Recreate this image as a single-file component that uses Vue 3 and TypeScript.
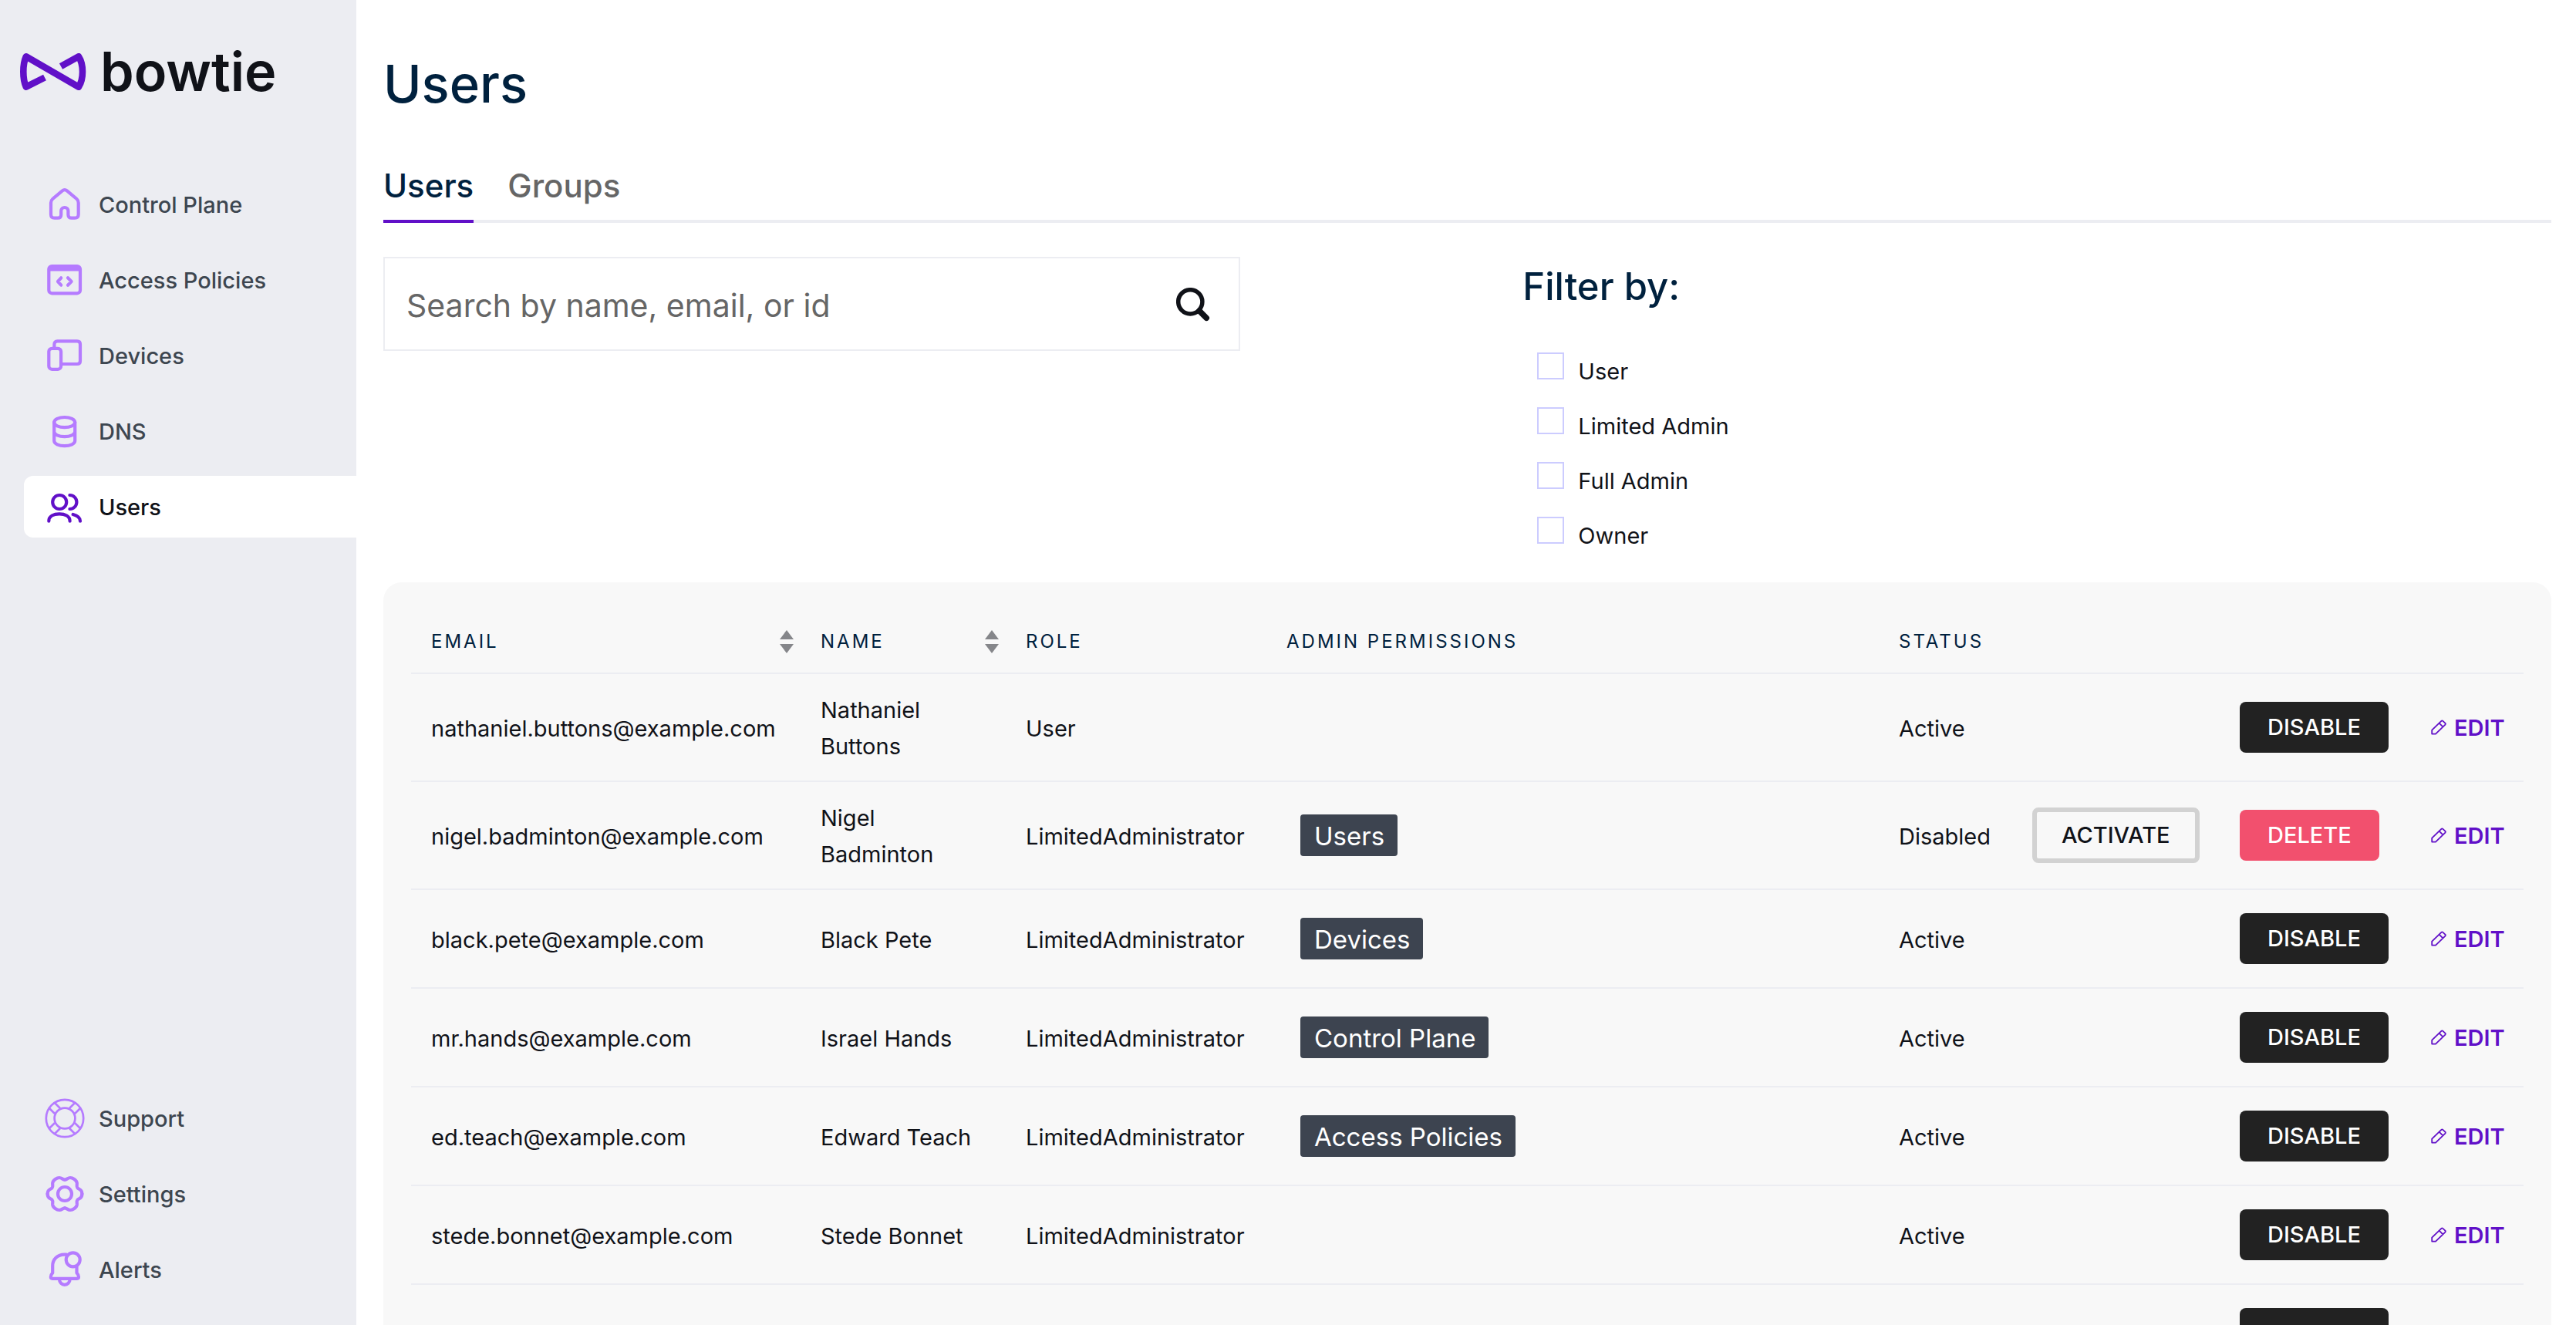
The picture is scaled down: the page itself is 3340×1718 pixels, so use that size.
<script setup lang="ts">
import { ref } from 'vue'

interface NavItem {
  label: string
  icon: string
}

interface UserRow {
  email: string
  name: string
  role: string
  permissions: string[]
  status: string
}

const mainNav: NavItem[] = [
  { label: 'Control Plane', icon: 'home' },
  { label: 'Access Policies', icon: 'policy' },
  { label: 'Devices', icon: 'devices' },
  { label: 'DNS', icon: 'dns' },
  { label: 'Users', icon: 'users' },
]

const footerNav: NavItem[] = [
  { label: 'Support', icon: 'support' },
  { label: 'Settings', icon: 'settings' },
  { label: 'Alerts', icon: 'alerts' },
]

const navGroups = [mainNav, footerNav]
const current = ref('Users')
const search = ref('')
const selectedRoles = ref<string[]>([])
const roles = ['User', 'Limited Admin', 'Full Admin', 'Owner']

const users: UserRow[] = [
  { email: 'nathaniel.buttons@example.com', name: 'Nathaniel Buttons', role: 'User', permissions: [], status: 'Active' },
  { email: 'nigel.badminton@example.com', name: 'Nigel Badminton', role: 'LimitedAdministrator', permissions: ['Users'], status: 'Disabled' },
  { email: 'black.pete@example.com', name: 'Black Pete', role: 'LimitedAdministrator', permissions: ['Devices'], status: 'Active' },
  { email: 'mr.hands@example.com', name: 'Israel Hands', role: 'LimitedAdministrator', permissions: ['Control Plane'], status: 'Active' },
  { email: 'ed.teach@example.com', name: 'Edward Teach', role: 'LimitedAdministrator', permissions: ['Access Policies'], status: 'Active' },
  { email: 'stede.bonnet@example.com', name: 'Stede Bonnet', role: 'LimitedAdministrator', permissions: [], status: 'Active' },
  { email: '', name: '', role: '', permissions: [], status: '' },
]
</script>

<template>
  <div class="app">
    <aside class="sidebar">
      <a class="brand" href="#">
        <svg class="brand-mark" viewBox="0 0 86 48" aria-hidden="true">
          <path d="M53 17 L76 4.3 Q81 12 81 24 Q81 36 76 43.7 L7.8 4.3 Q4.3 12 4.3 24 Q4.3 36 7.8 43.7 L32 31.5" />
        </svg>
        <span class="brand-name">bowtie</span>
      </a>
      <nav v-for="(group, g) in navGroups" :key="g" class="nav">
        <a
          v-for="item in group"
          :key="item.label"
          href="#"
          class="nav-item"
          :class="{ active: item.label === current }"
        >
          <svg class="nav-icon" viewBox="0 0 52 52" aria-hidden="true">
            <path
              v-if="item.icon === 'home'"
              d="M22.8 8.4 L10.2 19 Q8 21 8 24 V39 Q8 43.7 12.6 43.7 H16.8 Q21.2 43.7 21.2 39.4 V34.6 a4.6 4.6 0 0 1 9.2 0 V39.4 Q30.4 43.7 34.8 43.7 H39 Q43.7 43.7 43.7 39 V24 Q43.7 21 41.5 19 L28.9 8.4 Q25.8 5.9 22.8 8.4 Z"
            />
            <g v-else-if="item.icon === 'policy'">
              <rect x="5.3" y="8" width="40.7" height="35.3" rx="4" />
              <path d="M6 11.5 H45.5" class="thick" />
              <path d="M21.2 23.3 L17 28 L21.2 32.7 M30 23.3 L34.6 28 L30 32.7" />
            </g>
            <g v-else-if="item.icon === 'devices'">
              <path d="M12.4 16 V11.4 Q12.4 7.4 16.4 7.4 H42 Q46 7.4 46 11.4 V33 Q46 37 42 37 H22" />
              <rect x="5.3" y="16.8" width="15.8" height="27" rx="4" />
            </g>
            <g v-else-if="item.icon === 'dns'">
              <ellipse cx="25.7" cy="14.6" rx="13.5" ry="6.6" />
              <path d="M12.2 14.6 V38.6 A13.5 6.6 0 0 0 39.2 38.6 V14.6 M12.2 26.6 A13.5 6.6 0 0 0 39.2 26.6" />
            </g>
            <g v-else-if="item.icon === 'users'">
              <circle cx="19.2" cy="20" r="9" />
              <path d="M32.4 11 A9 9 0 0 1 32.4 29 M5.3 44.7 C5.3 38 12 35.4 19 35.4 S32.6 38 32.6 44.7 M36.6 36 C42 37.5 46 40 46 44.7" />
            </g>
            <g v-else-if="item.icon === 'support'" class="thin">
              <circle cx="26" cy="26" r="24.2" />
              <circle cx="26" cy="26" r="13.4" />
              <path
                v-for="angle in [0, 90, 180, 270]"
                :key="angle"
                d="M12.7 5.7 L20 13 M5.7 12.7 L13 20"
                :transform="`rotate(${angle} 26 26)`"
              />
            </g>
            <g v-else-if="item.icon === 'settings'">
              <circle cx="26" cy="26" r="9" />
              <path
                v-for="flip in ['1 1', '-1 1', '1 -1', '-1 -1']"
                :key="flip"
                d="M0 -18.4 C2.6 -18.4 4 -21 7 -21 C10 -21 15.4 -18 15.8 -14 C16 -11.4 15 -9.4 16.4 -7.8 C18 -5.8 22.4 -6.6 22.4 0"
                :transform="`translate(26 26) scale(${flip})`"
              />
            </g>
            <g v-else>
              <circle cx="36.7" cy="13.3" r="9" />
              <path d="M28 6.6 H25.5 C16.5 6.6 10.2 13 10.2 21.4 V30.6 Q7.8 33 7.8 35.8 Q7.8 37.8 9.8 37.8 H42 Q44 37.8 44 35.8 Q44 33 41.5 30.6 V22.6 M19 39 A6.8 6.8 0 0 0 32.6 39" />
            </g>
          </svg>
          <span>{{ item.label }}</span>
        </a>
      </nav>
    </aside>

    <main class="main">
      <h1 class="title">Users</h1>
      <div class="tabs">
        <a href="#" class="tab selected">Users</a>
        <a href="#" class="tab">Groups</a>
      </div>

      <section class="controls">
        <form class="search" @submit.prevent>
          <input v-model="search" type="text" aria-label="Search users" placeholder="Search by name, email, or id" />
          <button type="submit" aria-label="Search">
            <svg viewBox="0 0 44 44" aria-hidden="true">
              <circle cx="18.3" cy="18.3" r="15.6" />
              <path d="M30 30 L39.3 39.3" />
            </svg>
          </button>
        </form>
        <div class="filters">
          <h2>Filter by:</h2>
          <div class="filter-list">
            <label v-for="role in roles" :key="role">
              <input v-model="selectedRoles" type="checkbox" :value="role" />
              <span>{{ role }}</span>
            </label>
          </div>
        </div>
      </section>

      <section class="card">
        <table>
          <colgroup>
            <col class="col-email" />
            <col class="col-name" />
            <col class="col-role" />
            <col />
            <col class="col-status" />
            <col class="col-activate" />
            <col class="col-action" />
            <col class="col-edit" />
          </colgroup>
          <thead>
            <tr>
              <th v-for="head in ['Email', 'Name']" :key="head" class="sortable">
                <div class="sort-head">
                  <span>{{ head }}</span>
                  <svg viewBox="0 0 18 30" aria-hidden="true">
                    <path d="M9 0 L18 12 H0 Z M0 18 H18 L9 30 Z" />
                  </svg>
                </div>
              </th>
              <th>Role</th>
              <th>Admin Permissions</th>
              <th>Status</th>
              <th></th>
              <th></th>
              <th></th>
            </tr>
          </thead>
          <tbody>
            <tr v-for="(user, i) in users" :key="i">
              <td class="text">{{ user.email }}</td>
              <td class="text name">{{ user.name }}</td>
              <td class="text">{{ user.role }}</td>
              <td>
                <span v-for="p in user.permissions" :key="p" class="badge">{{ p }}</span>
              </td>
              <td class="text">{{ user.status }}</td>
              <td>
                <button v-if="user.status === 'Disabled'" type="button" class="btn outline">ACTIVATE</button>
              </td>
              <td>
                <button v-if="user.status === 'Disabled'" type="button" class="btn danger">DELETE</button>
                <button v-else type="button" class="btn dark">DISABLE</button>
              </td>
              <td>
                <a href="#" class="edit">
                  <svg viewBox="0 0 20 20" aria-hidden="true">
                    <path d="M1.2 18.6 V13.6 L13.4 1.8 Q14.4 0.9 15.4 1.8 L18.4 4.6 Q19.2 5.6 18.4 6.6 L6 18.6 Z M10.6 4.6 L15.4 9.4" />
                  </svg>
                  <span>EDIT</span>
                </a>
              </td>
            </tr>
          </tbody>
        </table>
      </section>
    </main>
  </div>
</template>

<style>
body {
  margin: 0;
  background: #fff;
}
</style>

<style scoped>
* {
  box-sizing: border-box;
}

.app {
  display: flex;
  height: 100vh;
  font-family: Inter, 'Liberation Sans', sans-serif;
  font-size: 29px;
  color: #101218;
}

a {
  color: inherit;
  text-decoration: none;
}

button,
input {
  font: inherit;
  margin: 0;
}

.sidebar {
  flex: none;
  display: flex;
  flex-direction: column;
  width: 462px;
  padding: 53px 0 32px 31px;
  background: #ecedf2;
}

.brand {
  display: flex;
  align-items: center;
  gap: 18px;
  height: 80px;
  margin: 0 0 92px -5px;
}

.brand-mark {
  width: 86px;
  height: 48px;
  fill: none;
  stroke: #6110c8;
  stroke-width: 8.6;
  stroke-linejoin: round;
}

.brand-name {
  font-size: 70px;
  font-weight: 600;
  line-height: 80px;
}

.nav {
  display: flex;
  flex-direction: column;
  gap: 18px;
}

.nav:last-child {
  margin-top: auto;
}

.nav-item {
  display: flex;
  align-items: center;
  gap: 18px;
  height: 80px;
  padding-left: 27px;
  border-radius: 12px 0 0 12px;
  font-weight: 500;
  color: #3d4650;
}

.nav-item span {
  padding-top: 1px;
}

.nav-item.active {
  background: #fff;
  color: #101218;
}

.nav-icon {
  width: 52px;
  height: 52px;
  fill: none;
  stroke: #b57bff;
  stroke-width: 4.2;
  stroke-linecap: round;
  stroke-linejoin: round;
}

.nav-icon .thin {
  stroke-width: 2.7;
  stroke-linecap: butt;
}

.nav-icon .thick {
  stroke-width: 6;
  stroke-linecap: butt;
}

.active .nav-icon {
  stroke: #6110c8;
}

.main {
  flex: 1;
  min-width: 0;
  padding: 69px 32px 32px 35px;
  overflow: hidden;
}

.title {
  margin: 0;
  font-size: 67px;
  font-weight: 500;
  line-height: 80px;
  color: #00213e;
}

.tabs {
  display: flex;
  gap: 44px;
  margin-top: 68px;
  box-shadow: inset 0 -4px #ecedf2;
}

.tab {
  padding-bottom: 20px;
  border-bottom: 4px solid transparent;
  font-size: 42px;
  font-weight: 500;
  line-height: 48px;
  color: #666;
}

.tab.selected {
  border-color: #6110c8;
  color: #00213e;
}

.controls {
  display: grid;
  grid-template-columns: 5fr 6fr;
  column-gap: 366px;
  align-items: start;
  margin-top: 44px;
}

.search {
  display: flex;
  align-items: center;
  height: 122px;
  padding: 2px 37px 0 28px;
  border: 2px solid #ecedf2;
}

.search input {
  flex: 1;
  min-width: 0;
  height: 100%;
  padding: 2px 0 0;
  border: 0;
  outline: 0;
  background: none;
  font-size: 41px;
}

.search input::placeholder {
  color: #666;
  opacity: 1;
}

.search button {
  display: flex;
  padding: 0;
  border: 0;
  background: none;
}

.search svg {
  width: 44px;
  height: 44px;
  fill: none;
  stroke: #101218;
  stroke-width: 5.5;
  stroke-linecap: round;
}

.search svg path {
  stroke-width: 7.5;
}

.filters h2 {
  margin: 9px 0 0;
  font-size: 49px;
  font-weight: 500;
  line-height: 60px;
  color: #00213e;
}

.filter-list {
  display: flex;
  flex-direction: column;
  align-items: flex-start;
  gap: 29px;
  margin: 55px 0 0 19px;
}

.filter-list label {
  display: flex;
  align-items: baseline;
  gap: 18px;
  height: 42px;
  line-height: 36px;
}

.filter-list input {
  appearance: none;
  width: 35px;
  height: 35px;
  border: 2px solid #ccccff;
  background: #fff;
}

.filter-list input:checked {
  background: #6110c8;
}

.card {
  margin-top: 43px;
  padding: 36px;
  border-radius: 24px;
  background: #f8f8f8;
}

table {
  width: 100%;
  table-layout: fixed;
  border-collapse: separate;
  border-spacing: 0;
}

.col-email {
  width: 505px;
}

.col-name {
  width: 266px;
}

.col-role {
  width: 338px;
}

.col-status {
  width: 173px;
}

.col-activate {
  width: 269px;
}

.col-action {
  width: 248px;
}

.col-edit {
  width: 146px;
}

th {
  height: 83px;
  padding: 0 0 0 26px;
  border-bottom: 2px solid #ecedf2;
  font-size: 24px;
  font-weight: 400;
  letter-spacing: 3px;
  text-align: left;
  text-transform: uppercase;
  color: #00213e;
}

th.sortable {
  padding-right: 9px;
}

.sort-head {
  display: flex;
  align-items: center;
  justify-content: space-between;
}

.sort-head svg {
  width: 18px;
  height: 30px;
  fill: #85868a;
}

td {
  height: 128px;
  padding: 22px 0 22px 26px;
  border-bottom: 2px solid #ecedf2;
  line-height: 47px;
}

td.text {
  padding-top: 23px;
  padding-bottom: 21px;
}

td.name {
  padding-right: 36px;
}

.badge {
  display: inline-block;
  margin-left: 18px;
  padding: 2px 17px 0 18px;
  border-radius: 4px;
  background: #3d4450;
  font-size: 33px;
  line-height: 52px;
  color: #fff;
  vertical-align: middle;
}

.btn {
  display: block;
  height: 66px;
  padding: 0 36px;
  border: 0;
  border-radius: 8px;
  font-weight: 500;
  line-height: 36px;
  color: #fff;
}

.btn.dark {
  background: #222;
}

.btn.danger {
  background: #f2506e;
}

.btn.outline {
  height: 72px;
  padding: 0 32px;
  border: 6px solid #d2d2d2;
  background: none;
  color: #101218;
}

.edit {
  display: flex;
  align-items: center;
  gap: 10px;
  font-weight: 600;
  color: #6110c8;
}

.edit svg {
  width: 20px;
  height: 20px;
  fill: none;
  stroke: #6110c8;
  stroke-width: 1.8;
  stroke-linejoin: round;
}
</style>
